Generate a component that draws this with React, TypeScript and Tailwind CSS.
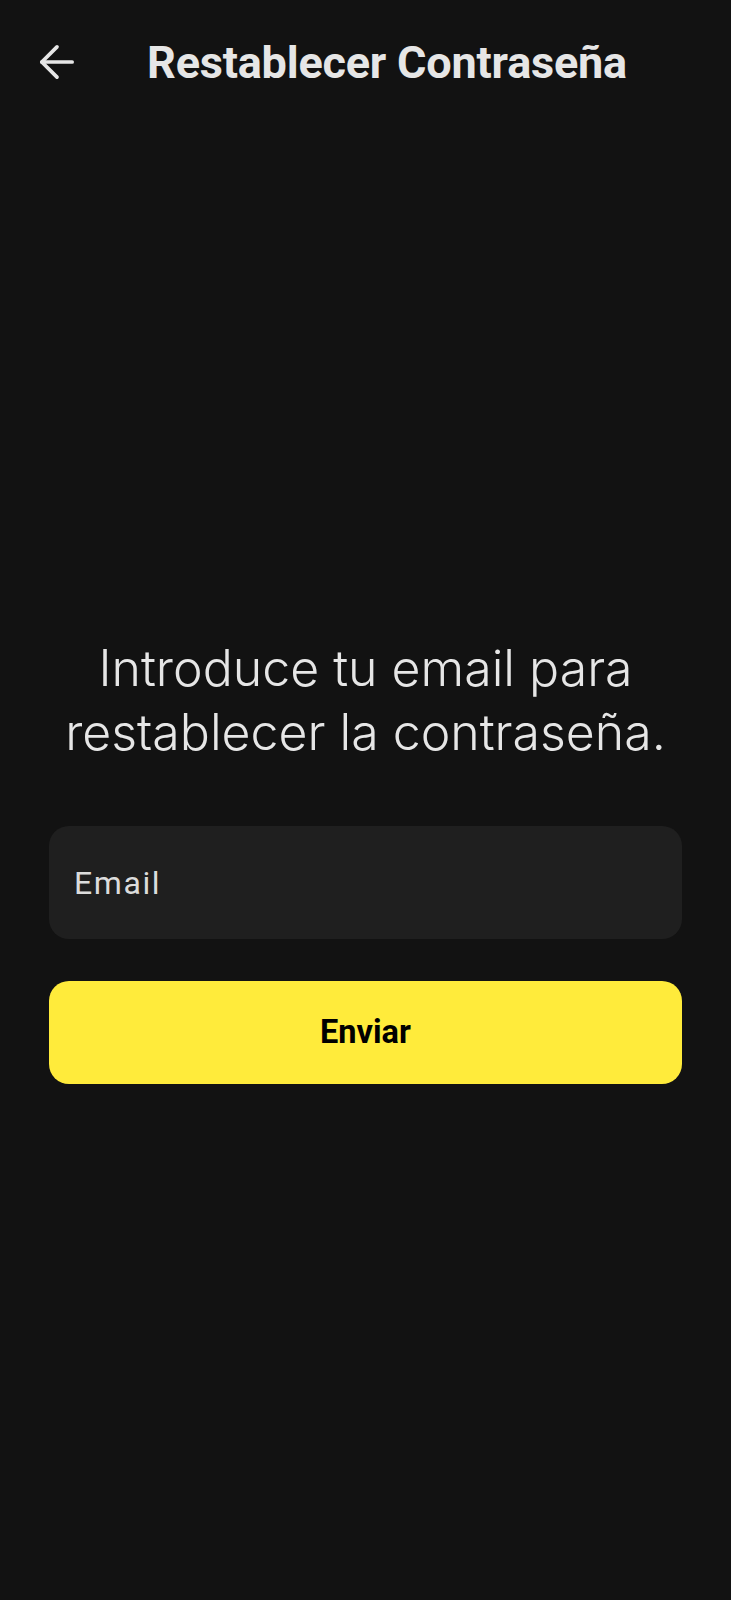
import { ArrowLeft } from "lucide-react";

export default function App() {
    return (
        <div className="min-h-[1600px] w-full bg-[#121212] font-['Roboto',sans-serif] text-[#e6e6e6]">
            {/* Header */}
            <header className="h-[124px] flex items-center pl-[31px]">
                <ArrowLeft className="w-[52px] h-[52px] shrink-0" strokeWidth={1.7} />
                <h1 className="ml-[64px] text-[45px] font-bold tracking-[-0.2px] leading-none">
                    Restablecer Contraseña
                </h1>
            </header>

            <main className="px-[49px] pt-[512px]">
                <p className="text-center font-['Inter',sans-serif] font-light text-[50px] leading-[64px]">
                    Introduce tu email para
                    <br />
                    restablecer la contraseña.
                </p>

                <div className="mt-[62px] h-[113px] rounded-[20px] bg-[#1f1f1f] flex items-center px-[25px]">
                    <span className="text-[32px] tracking-[1.6px] text-[#dcdcdc]">Email</span>
                </div>

                <button className="mt-[42px] w-full h-[103px] rounded-[20px] bg-[#ffeb3b] text-black text-[32.5px] font-bold flex items-center justify-center">
                    Enviar
                </button>
            </main>
        </div>
    );
}
